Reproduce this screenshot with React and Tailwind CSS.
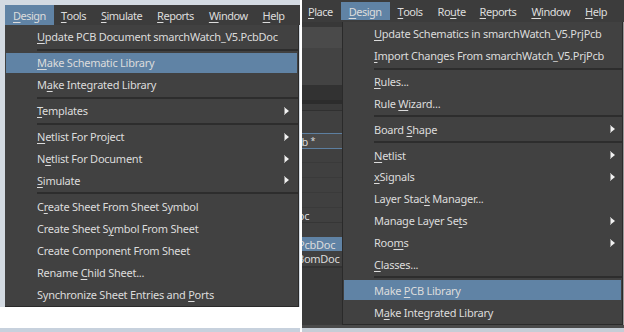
import React from "react";

const U = ({ children }) => (
  <span className="underline underline-offset-[2px] decoration-[1px]">{children}</span>
);

const Arrow = () => (
  <svg width="5" height="8" viewBox="0 0 5 8" className="shrink-0">
    <path d="M0 0 L5 4 L0 8 Z" fill="#f2f2f2" />
    <path d="M0 0 L1 0.6 L1 7.4 L0 8 Z" fill="#9a9a9a" />
  </svg>
);

const Item = ({ children, arrow, hl, pl = "pl-[31px]", pr = "pr-[8px]" }) => (
  <div className="h-[22px] p-[1px]">
    <div
      className={`h-full flex items-center justify-between ${pl} ${pr} ${
        hl ? "bg-[#6083a5]" : ""
      }`}
    >
      <span className="whitespace-nowrap">{children}</span>
      {arrow && <Arrow />}
    </div>
  </div>
);

const Sep = ({ pl = "pl-[32px]" }) => (
  <div className={`h-[4px] flex items-center ${pl}`}>
    <div className="h-[2px] w-full bg-[#2d2d2d]" />
  </div>
);

const TopItem = ({ children, hl, px = "px-[7px]" }) => (
  <div
    className={`h-full flex items-center ${px} whitespace-nowrap tracking-[-0.5px] ${
      hl ? "bg-[#6083a5]" : ""
    }`}
  >
    {children}
  </div>
);

function LeftShot() {
  return (
    <div className="w-[300px] h-full flex flex-col">
      <div className="h-[307px] bg-[#d3dae2] pt-[5px] pl-[5px] flex flex-col">
        <div className="h-[20px] bg-[#3c3c3c] flex items-stretch">
          <TopItem hl px="px-[8px]">
            <U>D</U>esign
          </TopItem>
          <TopItem>
            <U>T</U>ools
          </TopItem>
          <TopItem px="px-[8px]">
            <U>S</U>imulate
          </TopItem>
          <TopItem>
            <U>R</U>eports
          </TopItem>
          <TopItem px="px-[8px]">
            <U>W</U>indow
          </TopItem>
          <TopItem>
            <U>H</U>elp
          </TopItem>
        </div>
        <div className="h-[282px] w-[294px] bg-[#414141] border-r border-b border-[#2a2a2a] py-[1px] flex flex-col">
          <Item>
            <U>U</U>pdate PCB Document smarchWatch_V5.PcbDoc
          </Item>
          <Sep />
          <Item hl>
            <U>M</U>ake Schematic Library
          </Item>
          <Item>
            M<U>a</U>ke Integrated Library
          </Item>
          <Sep />
          <Item arrow>
            <U>T</U>emplates
          </Item>
          <Sep />
          <Item arrow>
            <U>N</U>etlist For Project
          </Item>
          <Item arrow>
            N<U>e</U>tlist For Document
          </Item>
          <Item arrow>
            <U>S</U>imulate
          </Item>
          <Sep />
          <Item>
            C<U>r</U>eate Sheet From Sheet Symbol
          </Item>
          <Item>
            Create Sheet S<U>y</U>mbol From Sheet
          </Item>
          <Item>Create Component From Sheet</Item>
          <Item>
            Rename <U>C</U>hild Sheet...
          </Item>
          <Item>
            Synchronize Sheet Entries and <U>P</U>orts
          </Item>
        </div>
      </div>
      <div className="h-[21px] bg-white" />
      <div className="h-[4px] bg-[#c7d1dd]" />
    </div>
  );
}

const PRow = ({ cls = "", children }) => (
  <div className={`overflow-hidden whitespace-nowrap flex items-center ${cls}`}>
    {children}
  </div>
);

function Panel() {
  return (
    <div className="w-[40px] h-full flex flex-col overflow-hidden">
      <div className="h-[5px] bg-[#383838]" />
      <div className="h-[21px] bg-[#4a4a4a]" />
      <div className="h-[37px] bg-[#434343]" />
      <div className="h-[15px] bg-[#323232]" />
      <div className="h-[4px] bg-[#2c2c2c]" />
      <div className="h-[6px] bg-[#3b3b3b]" />
      <div className="h-[1px] bg-[#303030]" />
      <div className="h-[22px] bg-[#404040]" />
      <div className="h-[1px] bg-[#5d7fa0]" />
      <PRow cls="h-[14px] bg-[#4a4a4a]">
        <span className="-ml-[12px]">
          Pcb <span className="text-[9px] align-top">*</span>
        </span>
      </PRow>
      <div className="h-[1px] bg-[#5d7fa0]" />
      <div className="h-[14px] bg-[#404040] border-b border-[#3a3a3a]" />
      <div className="h-[15px] bg-[#404040] border-b border-[#3a3a3a]" />
      <div className="h-[15px] bg-[#404040] border-b border-[#3a3a3a]" />
      <div className="h-[15px] bg-[#404040] border-b border-[#3a3a3a]" />
      <PRow cls="h-[15px] bg-[#404040] border-b border-[#363636]">
        <span className="-ml-[12px]">Doc</span>
      </PRow>
      <div className="h-[14px] bg-[#404040]" />
      <PRow cls="h-[14px] bg-[#6083a5]">
        <span className="-ml-[4px]">PcbDoc</span>
      </PRow>
      <PRow cls="h-[15px] bg-[#404040]">
        <span className="-ml-[5px]">BomDoc</span>
      </PRow>
      <div className="h-[2px] bg-[#333333]" />
      <div className="h-[57px] bg-[#3a3a3a]" />
    </div>
  );
}

function RightShot() {
  const rpl = "pl-[30px]";
  const rpr = "pr-[6px]";
  return (
    <div className="w-[322px] h-full flex flex-col bg-[#3a3a3a]">
      <div className="h-[22px] bg-[#3c3c3c] flex items-stretch">
        <TopItem px="pl-[6px] pr-[8px]">
          <U>P</U>lace
        </TopItem>
        <div className="h-full py-[2px] flex">
          <TopItem hl px="px-[8px]">
            <U>D</U>esign
          </TopItem>
        </div>
        <TopItem px="px-[8px]">
          <U>T</U>ools
        </TopItem>
        <TopItem px="px-[7px]">
          Ro<U>u</U>te
        </TopItem>
        <TopItem>
          <U>R</U>eports
        </TopItem>
        <TopItem px="px-[8px]">
          <U>W</U>indow
        </TopItem>
        <TopItem>
          <U>H</U>elp
        </TopItem>
      </div>
      <div className="h-[303px] flex">
        <Panel />
        <div className="w-[281px] h-full bg-[#414141] border-l border-r border-b border-[#2a2a2a] py-[1px] flex flex-col">
          <Item pl={rpl} pr={rpr}>
            <U>U</U>pdate Schematics in smarchWatch_V5.PrjPcb
          </Item>
          <Item pl={rpl} pr={rpr}>
            <U>I</U>mport Changes From smarchWatch_V5.PrjPcb
          </Item>
          <Sep pl="pl-[31px]" />
          <Item pl={rpl} pr={rpr}>
            <U>R</U>ules...
          </Item>
          <Item pl={rpl} pr={rpr}>
            Rule <U>W</U>izard...
          </Item>
          <Sep pl="pl-[31px]" />
          <Item pl={rpl} pr={rpr} arrow>
            Board <U>S</U>hape
          </Item>
          <Sep pl="pl-[31px]" />
          <Item pl={rpl} pr={rpr} arrow>
            <U>N</U>etlist
          </Item>
          <Item pl={rpl} pr={rpr} arrow>
            <U>x</U>Signals
          </Item>
          <Item pl={rpl} pr={rpr}>
            Layer Stac<U>k</U> Manager...
          </Item>
          <Item pl={rpl} pr={rpr} arrow>
            Manage Layer Se<U>t</U>s
          </Item>
          <Item pl={rpl} pr={rpr} arrow>
            Roo<U>m</U>s
          </Item>
          <Item pl={rpl} pr={rpr}>
            <U>C</U>lasses...
          </Item>
          <Sep pl="pl-[31px]" />
          <Item pl={rpl} pr={rpr} hl>
            Make <U>P</U>CB Library
          </Item>
          <Item pl={rpl} pr={rpr}>
            M<U>a</U>ke Integrated Library
          </Item>
        </div>
        <div className="w-[1px] h-full bg-[#9a9a9a]" />
      </div>
      <div className="h-[3px] bg-[#4a4a4a]" />
      <div className="h-[4px] bg-[#c5cdd6]" />
    </div>
  );
}

export default function App() {
  return (
    <div className="w-[624px] h-[332px] flex bg-white overflow-hidden text-[11px] tracking-[-0.25px] leading-none text-[#dcdcdc] font-['Noto_Sans',sans-serif]">
      <LeftShot />
      <div className="w-[2px] h-full bg-white" />
      <RightShot />
    </div>
  );
}
